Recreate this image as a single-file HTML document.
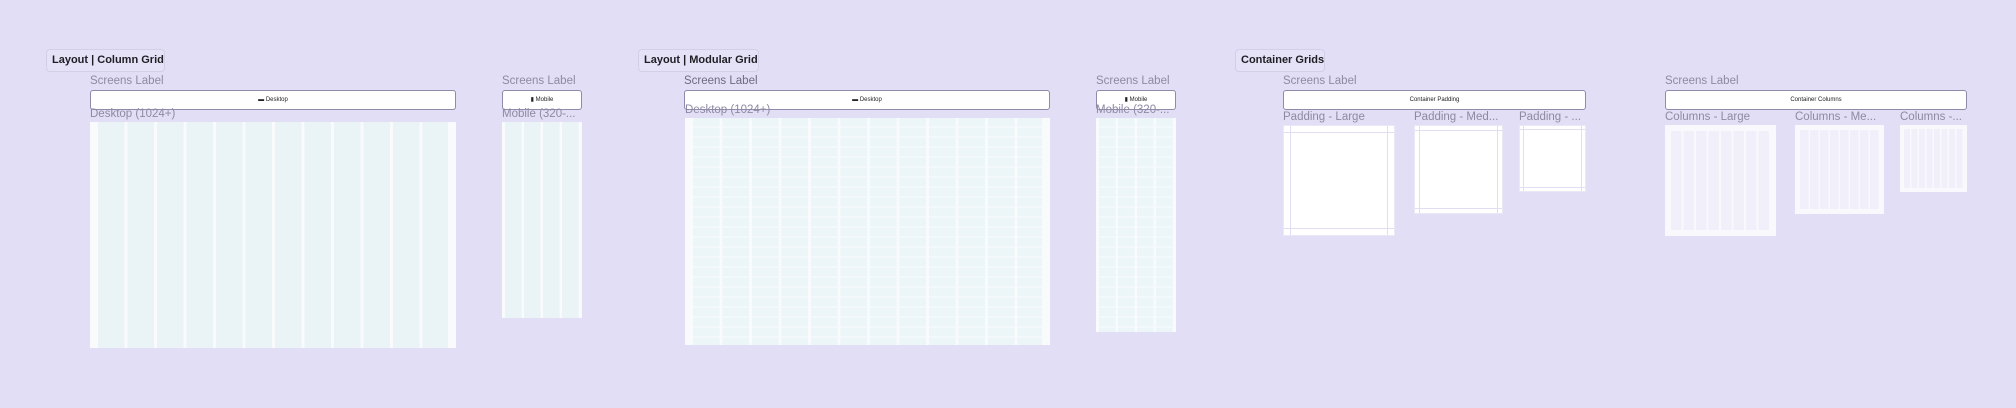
<!DOCTYPE html>
<html><head><meta charset="utf-8"><style>
*{margin:0;padding:0;box-sizing:border-box}
body{width:2016px;height:408px;background:#e2def5;font-family:"Liberation Sans",sans-serif;position:relative;overflow:hidden}
.a{position:absolute}
.badge{position:absolute;top:49px;height:23px;border:1px solid #d3cfe6;border-radius:4px;background:#e5e1f6;font-weight:bold;font-size:11px;color:#1e1e24;line-height:21px;padding-left:5px;white-space:nowrap;overflow:hidden}
.lbl{position:absolute;font-size:11.5px;color:#8d8aa3;white-space:nowrap;overflow:hidden}
.btn{position:absolute;top:90px;height:20px;background:#fff;border:1px solid #8e8bab;border-radius:3px;font-size:6px;color:#222;text-align:center;line-height:18px}
.dg{position:absolute;background:#f8fafc repeating-linear-gradient(90deg,#eaf4f6 0 26.3px,#f8fafc 26.3px 29.5px) 8px 0/calc(100% - 16px) 100% no-repeat}
.mg{position:absolute;background:
 repeating-linear-gradient(180deg,rgba(248,250,252,0) 0 8px,rgba(248,250,252,.6) 8px 10px),
 repeating-linear-gradient(90deg,#ecf5f7 0 26.3px,#f8fafc 26.3px 29.5px) 8px 0/calc(100% - 16px) 100% no-repeat,#f8fafc}
.pb{position:absolute;background:#fff;border:1px solid #ebe8f6}
.pb i{position:absolute;background:#e1ddf3}
.cb{position:absolute;background:#f9f8fd}
</style></head><body>
<div class="badge" style="left:46px;width:119px">Layout | Column Grid</div>
<div class="lbl" style="left:90px;top:75px">Screens Label</div>
<div class="btn" style="left:90px;width:366px">▬ Desktop</div>
<div class="lbl" style="left:90px;top:108px">Desktop (1024+)</div>
<div class="dg" style="left:90px;top:122px;width:366px;height:226px"></div>
<div class="lbl" style="left:502px;top:75px">Screens Label</div>
<div class="btn" style="left:502px;width:80px">▮ Mobile</div>
<div class="lbl" style="left:502px;top:108px;width:80px">Mobile (320-...</div>
<div class="a" style="left:502px;top:122px;width:80px;height:196px;background:#f8fafc repeating-linear-gradient(90deg,#eaf4f6 0 16.5px,#f8fafc 16.5px 19px) 3px 0/74px 100% no-repeat"></div>

<div class="badge" style="left:638px;width:121px">Layout | Modular Grid</div>
<div class="lbl" style="left:684px;top:75px;color:#6e6b80">Screens Label</div>
<div class="btn" style="left:684px;width:366px">▬ Desktop</div>
<div class="mg" style="left:685px;top:118px;width:365px;height:227px"></div>
<div class="lbl" style="left:685px;top:104px">Desktop (1024+)</div>
<div class="lbl" style="left:1096px;top:75px">Screens Label</div>
<div class="btn" style="left:1096px;width:80px">▮ Mobile</div>
<div class="a" style="left:1096px;top:118px;width:80px;height:214px;background:repeating-linear-gradient(180deg,rgba(248,250,252,0) 0 8px,rgba(248,250,252,.6) 8px 10px),repeating-linear-gradient(90deg,#ecf5f7 0 16.5px,#f8fafc 16.5px 19px) 3px 0/74px 100% no-repeat,#f8fafc"></div>
<div class="lbl" style="left:1096px;top:104px;width:80px">Mobile (320-...</div>

<div class="badge" style="left:1235px;width:90px">Container Grids</div>
<div class="lbl" style="left:1283px;top:75px">Screens Label</div>
<div class="btn" style="left:1283px;width:303px">Container Padding</div>
<div class="lbl" style="left:1283px;top:111px;width:110px">Padding - Large</div>
<div class="pb" style="left:1283px;top:125px;width:112px;height:111px"><i style="left:6px;top:0;width:1px;height:100%"></i><i style="right:6px;top:0;width:1px;height:100%"></i><i style="left:0;top:6px;height:1px;width:100%"></i><i style="left:0;bottom:6px;height:1px;width:100%"></i></div>
<div class="lbl" style="left:1414px;top:111px;width:88px">Padding - Med...</div>
<div class="pb" style="left:1414px;top:125px;width:89px;height:89px"><i style="left:4px;top:0;width:1px;height:100%"></i><i style="right:4px;top:0;width:1px;height:100%"></i><i style="left:0;top:4px;height:1px;width:100%"></i><i style="left:0;bottom:4px;height:1px;width:100%"></i></div>
<div class="lbl" style="left:1519px;top:111px;width:68px">Padding - ...</div>
<div class="pb" style="left:1519px;top:125px;width:67px;height:67px"><i style="left:3px;top:0;width:1px;height:100%"></i><i style="right:3px;top:0;width:1px;height:100%"></i><i style="left:0;top:3px;height:1px;width:100%"></i><i style="left:0;bottom:3px;height:1px;width:100%"></i></div>

<div class="lbl" style="left:1665px;top:75px">Screens Label</div>
<div class="btn" style="left:1665px;width:302px">Container Columns</div>
<div class="lbl" style="left:1665px;top:111px;width:110px">Columns - Large</div>
<div class="cb" style="left:1665px;top:125px;width:111px;height:111px;background:linear-gradient(180deg,#f9f8fd 0 6px,transparent 6px calc(100% - 6px),#f9f8fd calc(100% - 6px)),repeating-linear-gradient(90deg,#f1effa 0 10.5px,#f9f8fd 10.5px 12.5px) 6px 0/99px 100% no-repeat,#f9f8fd"></div>
<div class="lbl" style="left:1795px;top:111px;width:88px">Columns - Me...</div>
<div class="cb" style="left:1795px;top:125px;width:89px;height:89px;background:linear-gradient(180deg,#f9f8fd 0 5px,transparent 5px calc(100% - 5px),#f9f8fd calc(100% - 5px)),repeating-linear-gradient(90deg,#f1effa 0 8.5px,#f9f8fd 8.5px 10px) 5px 0/79px 100% no-repeat,#f9f8fd"></div>
<div class="lbl" style="left:1900px;top:111px;width:68px">Columns -...</div>
<div class="cb" style="left:1900px;top:125px;width:67px;height:67px;background:linear-gradient(180deg,#f9f8fd 0 4px,transparent 4px calc(100% - 4px),#f9f8fd calc(100% - 4px)),repeating-linear-gradient(90deg,#f1effa 0 6px,#f9f8fd 6px 7.5px) 4px 0/59px 100% no-repeat,#f9f8fd"></div>
</body></html>
